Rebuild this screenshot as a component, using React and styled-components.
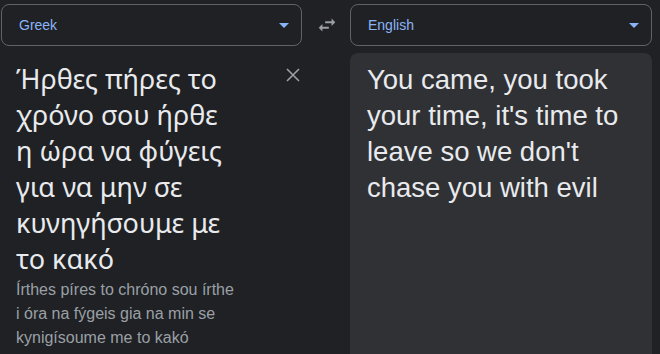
import React from "react";
import styled, { createGlobalStyle } from "styled-components";

const GlobalStyle = createGlobalStyle`
  html, body {
    margin: 0;
    padding: 0;
    background: #202124;
    overflow: hidden;
  }
`;

const Page = styled.div`
  width: 660px;
  height: 354px;
  box-sizing: border-box;
  padding: 4px 8px 0 1px;
  display: grid;
  grid-template-columns: 301px 1fr 302px;
  grid-template-rows: 42px 1fr;
  row-gap: 7px;
  background: #202124;
  font-family: "Liberation Sans", Arial, sans-serif;
`;

const LangSelect = styled.div`
  box-sizing: border-box;
  height: 42px;
  border: 1px solid #5f6368;
  border-radius: 8px;
  display: flex;
  align-items: center;
  justify-content: space-between;
  padding: 0 12px 0 17px;
  color: #8ab4f8;
  font-size: 14px;
  cursor: pointer;
`;

const Caret = styled.span`
  width: 0;
  height: 0;
  border-left: 5px solid transparent;
  border-right: 5px solid transparent;
  border-top: 5px solid #8ab4f8;
  margin-top: 1px;
`;

const SwapButton = styled.div`
  display: flex;
  align-items: center;
  justify-content: center;
  padding-left: 1px;
  color: #9aa0a6;
`;

const SourceCol = styled.div`
  position: relative;
  padding: 8px 0 0 15px;
`;

const SourceText = styled.div`
  width: 214px;
  font-family: "Noto Sans", "Liberation Sans", sans-serif;
  font-size: 27px;
  line-height: 36px;
  color: #e8eaed;
`;

const Translit = styled.div`
  width: 225px;
  font-size: 16px;
  line-height: 24px;
  color: #9aa0a6;
  margin-top: 1px;
`;

const ClearButton = styled.button`
  position: absolute;
  top: 14px;
  right: 1px;
  width: 16px;
  height: 16px;
  padding: 0;
  border: none;
  background: none;
  color: #9aa0a6;
  display: flex;
  align-items: center;
  justify-content: center;
`;

const TargetPanel = styled.div`
  grid-column: 3;
  background: #303134;
  border-radius: 8px 8px 0 0;
  padding: 9px 12px 0 17px;
`;

const TargetText = styled.div`
  font-size: 27.5px;
  line-height: 36px;
  color: #e8eaed;
`;

const SwapIcon = () => (
  <svg width="22" height="22" viewBox="0 0 24 24" fill="currentColor">
    <path d="M6.99 11L3 15l3.99 4v-3H14v-2H6.99v-3zM21 9l-3.99-4v3H10v2h7.01v3L21 9z" />
  </svg>
);

const CloseIcon = () => (
  <svg width="14" height="14" viewBox="0 0 14 14" stroke="currentColor" strokeWidth="1.6">
    <path d="M1 1L13 13M13 1L1 13" />
  </svg>
);

export default function App() {
  return (
    <>
      <GlobalStyle />
      <Page>
        <LangSelect>
          Greek
          <Caret />
        </LangSelect>
        <SwapButton>
          <SwapIcon />
        </SwapButton>
        <LangSelect>
          English
          <Caret />
        </LangSelect>

        <SourceCol>
          <SourceText>
            Ήρθες πήρες το χρόνο σου ήρθε η ώρα να φύγεις για να μην σε κυνηγήσουμε με το κακό
          </SourceText>
          <Translit>
            Írthes píres to chróno sou írthe i óra na fýgeis gia na min se kynigísoume me to kakó
          </Translit>
          <ClearButton>
            <CloseIcon />
          </ClearButton>
        </SourceCol>
        <TargetPanel>
          <TargetText>
            You came, you took your time, it's time to leave so we don't chase you with evil
          </TargetText>
        </TargetPanel>
      </Page>
    </>
  );
}
